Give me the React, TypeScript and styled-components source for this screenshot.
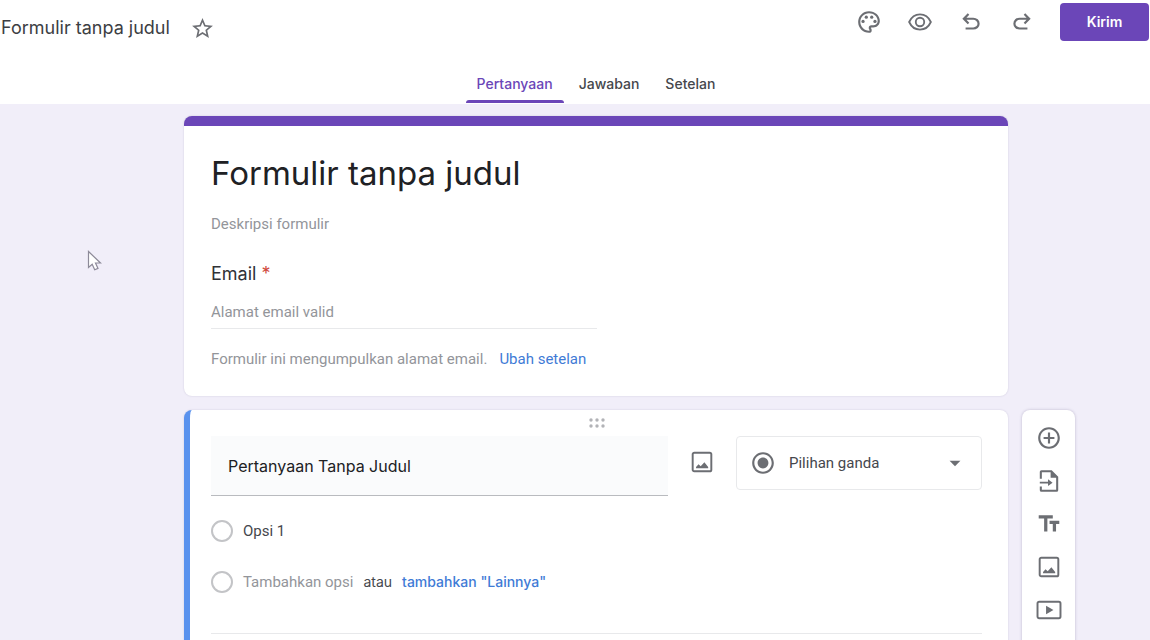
import React from "react";
import styled, { createGlobalStyle } from "styled-components";
import {
  MdAddCircleOutline,
  MdArrowDropDown,
  MdOutlinePalette,
  MdRadioButtonChecked,
  MdStarBorder,
  MdTextFields,
} from "react-icons/md";

const display = `Inter, "Open Sans", sans-serif`;
const body = `Roboto, "Liberation Sans", sans-serif`;

const colors = {
  purple: "#6b46b8",
  page: "#f1eef9",
  ink: "#202124",
  text: "#45474c",
  muted: "#93959a",
  icon: "#6c6e73",
  blue: "#3f7bd6",
  focus: "#5a92ee",
  line: "#e8e9eb",
};

const GlobalStyle = createGlobalStyle`
  *, *::before, *::after { box-sizing: border-box; }
  body { margin: 0; background: ${colors.page}; font-family: ${body}; color: ${colors.ink}; }
  button, input, select { font: inherit; color: inherit; border: 0; padding: 0; margin: 0; background: none; outline: none; }
  button { cursor: pointer; }
  h1, h2, p { margin: 0; font-weight: 400; }
`;

const Page = styled.div`
  position: relative;
  height: 100vh;
  overflow: hidden;
`;

const Header = styled.header`
  background: #fff;
  display: flex;
  flex-direction: column;
  height: 104px;
`;

const TopRow = styled.div`
  display: flex;
  justify-content: space-between;
  align-items: flex-start;
  padding: 3px 1px 0 1px;
`;

const FileName = styled.div`
  display: flex;
  align-items: center;
  gap: 20px;
  height: 50px;
  font: 400 18px/24px ${display};
  color: #3c3e43;
`;

const Actions = styled.div`
  display: flex;
  align-items: center;
  gap: 25px;
`;

const IconButton = styled.button`
  display: flex;
  color: ${colors.icon};
`;

const SendButton = styled.button`
  width: 89px;
  height: 38px;
  border-radius: 4px;
  background: ${colors.purple};
  color: #fff;
  font: 600 14px/20px ${display};
`;

const Tabs = styled.nav`
  display: flex;
  justify-content: center;
  gap: 4px;
  margin-top: auto;
  padding-left: 42px;
`;

const Tab = styled.button<{ $active?: boolean }>`
  height: 38px;
  padding: 0 11px 3px;
  font: 500 14px/20px ${display};
  color: ${(p) => (p.$active ? colors.purple : colors.text)};
  position: relative;

  &::after {
    content: "";
    display: ${(p) => (p.$active ? "block" : "none")};
    position: absolute;
    left: 0;
    right: 0;
    bottom: 1px;
    height: 3px;
    border-radius: 3px 3px 0 0;
    background: ${colors.purple};
  }
`;

const Main = styled.main`
  display: grid;
  grid-template-columns: 1fr minmax(0, 824px) 1fr;
  row-gap: 14px;
  padding: 12px 0 0 42px;
`;

const Card = styled.section`
  grid-column: 2;
  background: #fff;
  border-radius: 8px;
  overflow: hidden;
  box-shadow: 0 0 2px rgba(70, 60, 110, 0.2);
`;

const TitleCard = styled(Card)`
  border-top: 10px solid ${colors.purple};
  padding: 25px 27px 27px;
  display: flex;
  flex-direction: column;
`;

const FormTitle = styled.h1`
  font: 400 33px/44px ${display};
`;

const TextField = styled.input`
  font: 400 15px/20px ${body};
  height: 20px;
  width: 100%;

  &::placeholder {
    color: ${colors.muted};
    opacity: 1;
  }
`;

const Description = styled(TextField)`
  margin-top: 19px;
`;

const EmailLabel = styled.label`
  margin-top: 28px;
  font: 400 18px/24px ${display};
  color: #303237;
`;

const Required = styled.span`
  color: #d0493d;
`;

const EmailField = styled(TextField)`
  margin-top: 15px;
  width: 386px;
  max-width: 100%;
  height: 28px;
  padding-bottom: 5px;
  border-bottom: 1px solid ${colors.line};
`;

const Note = styled.p`
  display: flex;
  gap: 12px;
  margin-top: 20px;
  font-size: 15px;
  line-height: 20px;
  color: ${colors.muted};
`;

const Link = styled.a`
  color: ${colors.blue};
  text-decoration: none;
`;

const QuestionCard = styled(Card)`
  border-left: 6px solid ${colors.focus};
  padding: 8px 26px 60px 21px;
`;

const DragHandle = styled.button`
  display: flex;
  margin: 0 auto;
  color: #b2b3b7;
`;

const QuestionRow = styled.div`
  display: flex;
  align-items: flex-start;
  margin-top: 8px;
`;

const QuestionTitle = styled.input`
  flex: 1;
  min-width: 0;
  height: 60px;
  padding: 0 17px;
  background: #fafbfc;
  border-bottom: 1px solid #b9bbbf;
  font: 400 16px/24px ${display};
`;

const ImageButton = styled(IconButton)`
  margin: 13px 21px 0;
`;

const TypePicker = styled.div`
  display: flex;
  align-items: center;
  width: 246px;
  height: 54px;
  padding: 0 13px;
  border: 1px solid ${colors.line};
  border-radius: 4px;
  color: ${colors.icon};
`;

const TypeSelect = styled.select`
  appearance: none;
  flex: 1;
  min-width: 0;
  height: 100%;
  margin-left: 13px;
  font: 400 15px/20px ${body};
  color: ${colors.text};
`;

const Options = styled.div`
  display: flex;
  flex-direction: column;
  gap: 29px;
  padding: 24px 0 40px;
  border-bottom: 1px solid ${colors.line};
`;

const Option = styled.div`
  display: flex;
  align-items: center;
  height: 22px;
  font-size: 15px;
  line-height: 20px;
  color: ${colors.text};
`;

const Radio = styled.input`
  appearance: none;
  flex: none;
  width: 22px;
  height: 22px;
  margin-right: 10px;
  border: 2px solid #c3c4c7;
  border-radius: 50%;
`;

const AddOption = styled.label`
  color: ${colors.muted};
  margin-right: 10px;
`;

const Or = styled.span`
  font: 400 14px/20px ${display};
`;

const AddOther = styled.button`
  color: ${colors.blue};
  font: 500 14px/20px ${display};
  margin-left: 10px;
`;

const Toolbar = styled.aside`
  grid-column: 3;
  display: flex;
  flex-direction: column;
  align-items: center;
  gap: 17px;
  width: 53px;
  margin-left: 14px;
  padding-top: 15px;
  background: #fff;
  border-radius: 8px;
  box-shadow: 0 0 3px rgba(70, 60, 110, 0.3);
`;

const Pointer = styled.svg`
  position: absolute;
  left: 87px;
  top: 250px;
`;

type GlyphProps = { children: React.ReactNode };
const Glyph = ({ children }: GlyphProps) => (
  <svg width="26" height="26" viewBox="0 0 24 24" fill="currentColor" aria-hidden="true">
    {children}
  </svg>
);

const ArrowPath = () => (
  <path d="M7 19v-2h7.1q1.575 0 2.737-1Q18 15 18 13.5T16.837 11Q15.675 10 14.1 10H7.8l2.6 2.6L9 14 4 9l5-5 1.4 1.4L7.8 8h6.3q2.425 0 4.163 1.575Q20 11.15 20 13.5q0 2.35-1.737 3.925Q16.525 19 14.1 19Z" />
);

const UndoIcon = () => (
  <Glyph>
    <ArrowPath />
  </Glyph>
);

const RedoIcon = () => (
  <Glyph>
    <g transform="matrix(-1 0 0 1 24 0)">
      <ArrowPath />
    </g>
  </Glyph>
);

const EyeIcon = () => (
  <Glyph>
    <g fill="none" stroke="currentColor" strokeWidth="1.7">
      <path d="M2 12C4 7.600 7.700 5 12 5s8 2.600 10 7c-2 4.400-5.700 7-10 7S4 16.400 2 12Z" />
      <circle cx="12" cy="12" r="3.900" />
    </g>
  </Glyph>
);

const ImageIcon = () => (
  <Glyph>
    <rect x="3.400" y="3.400" width="17.200" height="17.200" rx="1.500" fill="none" stroke="currentColor" strokeWidth="1.800" />
    <path d="M6.500 17.700v-1l2.300-2.600 2 1.900 3.400-3.700 3.500 4.400v1Z" />
  </Glyph>
);

const VideoIcon = () => (
  <Glyph>
    <rect x="1.400" y="4.400" width="21.200" height="15.200" rx="1.500" fill="none" stroke="currentColor" strokeWidth="1.800" />
    <path d="M9.300 8v8l6.800-4Z" />
  </Glyph>
);

const ImportIcon = () => (
  <Glyph>
    <path d="M3.500 10V3.500q0-1.500 1.500-1.500h9.500L20.500 8v12.500q0 1.500-1.500 1.500H5q-1.500 0-1.500-1.500V17h1.900v3.100h13.200V9H13.500V3.900H5.400V10Z" />
    <path d="M3.500 12.600h7.600v-2.300l4.200 3.200-4.200 3.200v-2.300H3.500Z" />
  </Glyph>
);

const DragIcon = () => (
  <svg width="18" height="10" viewBox="0 0 18 10" fill="currentColor" aria-hidden="true">
    {[3, 9, 15].map((x) => (
      <g key={x}>
        <circle cx={x} cy="2" r="1.700" />
        <circle cx={x} cy="8" r="1.700" />
      </g>
    ))}
  </svg>
);

export default function App() {
  return (
    <Page>
      <GlobalStyle />
      <Header>
        <TopRow>
          <FileName>
            <span>Formulir tanpa judul</span>
            <IconButton aria-label="Beri bintang">
              <MdStarBorder size={25} />
            </IconButton>
          </FileName>
          <Actions>
            <IconButton aria-label="Sesuaikan tema">
              <MdOutlinePalette size={26} />
            </IconButton>
            <IconButton aria-label="Pratinjau">
              <EyeIcon />
            </IconButton>
            <IconButton aria-label="Urungkan">
              <UndoIcon />
            </IconButton>
            <IconButton aria-label="Ulangi">
              <RedoIcon />
            </IconButton>
            <SendButton>Kirim</SendButton>
          </Actions>
        </TopRow>
        <Tabs>
          <Tab $active>Pertanyaan</Tab>
          <Tab>Jawaban</Tab>
          <Tab>Setelan</Tab>
        </Tabs>
      </Header>

      <Main>
        <TitleCard>
          <FormTitle>Formulir tanpa judul</FormTitle>
          <Description placeholder="Deskripsi formulir" aria-label="Deskripsi formulir" />
          <EmailLabel htmlFor="email">
            Email <Required>*</Required>
          </EmailLabel>
          <EmailField id="email" type="email" placeholder="Alamat email valid" />
          <Note>
            Formulir ini mengumpulkan alamat email. <Link href="#setelan">Ubah setelan</Link>
          </Note>
        </TitleCard>

        <QuestionCard>
          <DragHandle aria-label="Pindahkan">
            <DragIcon />
          </DragHandle>
          <QuestionRow>
            <QuestionTitle defaultValue="Pertanyaan Tanpa Judul" aria-label="Pertanyaan" />
            <ImageButton aria-label="Tambahkan gambar">
              <ImageIcon />
            </ImageButton>
            <TypePicker>
              <MdRadioButtonChecked size={26} />
              <TypeSelect aria-label="Jenis pertanyaan">
                <option>Pilihan ganda</option>
              </TypeSelect>
              <MdArrowDropDown size={26} />
            </TypePicker>
          </QuestionRow>
          <Options>
            <Option>
              <Radio type="radio" name="opsi" id="opsi-1" />
              <label htmlFor="opsi-1">Opsi 1</label>
            </Option>
            <Option>
              <Radio type="radio" name="opsi" id="opsi-2" />
              <AddOption htmlFor="opsi-2">Tambahkan opsi</AddOption>
              <Or>atau</Or>
              <AddOther>tambahkan "Lainnya"</AddOther>
            </Option>
          </Options>
        </QuestionCard>

        <Toolbar>
          <IconButton aria-label="Tambahkan pertanyaan">
            <MdAddCircleOutline size={26} />
          </IconButton>
          <IconButton aria-label="Impor pertanyaan">
            <ImportIcon />
          </IconButton>
          <IconButton aria-label="Tambahkan judul dan deskripsi">
            <MdTextFields size={26} />
          </IconButton>
          <IconButton aria-label="Tambahkan gambar">
            <ImageIcon />
          </IconButton>
          <IconButton aria-label="Tambahkan video">
            <VideoIcon />
          </IconButton>
        </Toolbar>
      </Main>

      <Pointer width="16" height="22" viewBox="0 0 16 22" aria-hidden="true">
        <path d="M1.500 1.500v16l3.700-3.300 2.500 5.600 3.300-1.400-2.500-5.400h5Z" fill="#fff" stroke="#8d8a99" strokeWidth="1.200" />
      </Pointer>
    </Page>
  );
}
